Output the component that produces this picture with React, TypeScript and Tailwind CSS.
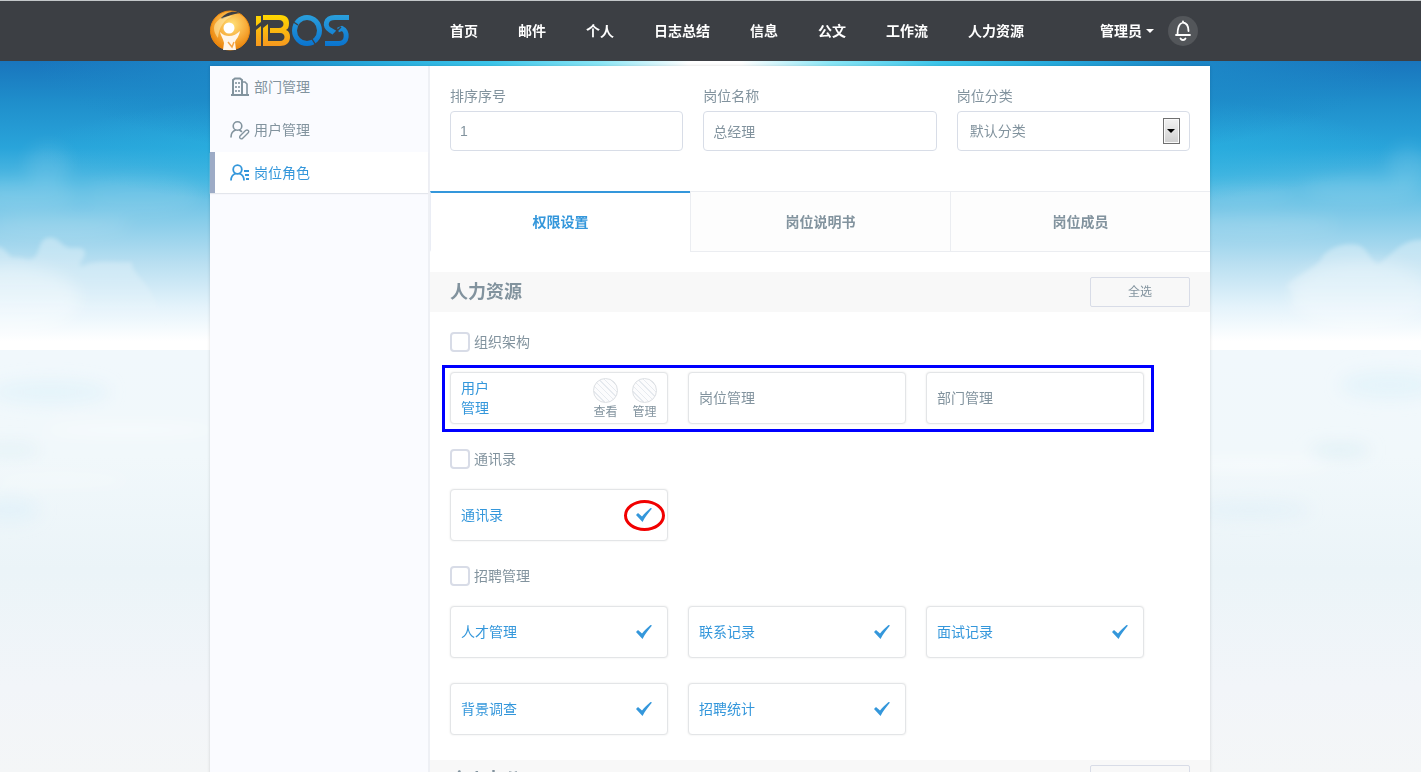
import clsx from 'clsx';
import React from 'react';

const navItems = ['首页', '邮件', '个人', '日志总结', '信息', '公文', '工作流', '人力资源'];

interface Permission {
  name: string;
  active?: boolean;
  checked?: boolean;
  levels?: string[];
}

interface PermissionGroup {
  id: string;
  title: string;
  highlighted?: boolean;
  items: Permission[];
}

const groups: PermissionGroup[] = [
  {
    id: 'organization',
    title: '组织架构',
    highlighted: true,
    items: [{ name: '用户管理', active: true, levels: ['查看', '管理'] }, { name: '岗位管理' }, { name: '部门管理' }],
  },
  {
    id: 'contact',
    title: '通讯录',
    items: [{ name: '通讯录', active: true, checked: true }],
  },
  {
    id: 'recruit',
    title: '招聘管理',
    items: [
      { name: '人才管理', active: true, checked: true },
      { name: '联系记录', active: true, checked: true },
      { name: '面试记录', active: true, checked: true },
      { name: '背景调查', active: true, checked: true },
      { name: '招聘统计', active: true, checked: true },
    ],
  },
];

const Logo = () => (
  <svg aria-label="IBOS" className="block" height="42" role="img" viewBox="0 0 140 42" width="140">
    <defs>
      <radialGradient cx="0.55" cy="0.35" id="ball" r="0.65">
        <stop offset="0" stopColor="#ffe27a" />
        <stop offset="0.55" stopColor="#f8ae3c" />
        <stop offset="1" stopColor="#ea8208" />
      </radialGradient>
      <linearGradient gradientUnits="userSpaceOnUse" id="gold" x1="0" x2="0" y1="5" y2="36">
        <stop offset="0" stopColor="#ffd800" />
        <stop offset="1" stopColor="#f6981f" />
      </linearGradient>
      <linearGradient gradientUnits="userSpaceOnUse" id="blue" x1="0" x2="0" y1="5" y2="36">
        <stop offset="0" stopColor="#2a9fdc" />
        <stop offset="1" stopColor="#0a74cf" />
      </linearGradient>
    </defs>
    <circle cx="20" cy="20.5" fill="url(#ball)" r="19.5" stroke="#ee8a10" />
    <path d="M11 8 C16 3 22 0 30 3 C23 4 17 6 12 9Z" fill="#3c3f44" />
    <path d="M5 14 C9 8 15 6 22 6 C14 10 9 17 8 28 C4 23 3 18 5 14Z" fill="#ffe9a8" opacity="0.6" />
    <circle cx="19" cy="18" fill="#fff" r="5.5" />
    <path
      d="M10 22 C13 25 16 26 19 26 C23 26 27 24 30 21 C29 27 26 29 25 32 L26 40 H13 L14 33 C13 28 11 26 10 22Z"
      fill="#fff6ea"
    />
    <path d="M18 32 L22 37 L24 32" fill="none" stroke="#f5a545" strokeWidth="1.5" />
    <path d="M46 6 H51 V12 L46 16Z M46 20 L51 16 V36 H46Z" fill="url(#gold)" />
    <path
      d="M53 5 H70 C77 5 79 9 79 13 C79 17 78 19 76 20 C79 21 80 24 80 27 C80 33 76 36 70 36 H53 V18 L58 14 V31 H70 C76 31 76 23 70 23 H60 V18 H69 C75 18 75 10 69 10 H53Z"
      fill="url(#gold)"
      fillRule="evenodd"
    />
    <ellipse cx="97" cy="20.5" fill="none" rx="12.5" ry="13" stroke="url(#blue)" strokeWidth="5" />
    <path d="M82 11 L88 15 M102 29 L107 37" stroke="#3c3f44" strokeWidth="1.4" />
    <path
      d="M139 7.5 H125 C115 7.5 114 17 120 20 L125 23 M128 20 L132 18.5 C138 21 138 33.5 129 33.5 H115"
      fill="none"
      stroke="url(#blue)"
      strokeWidth="5"
    />
    <path d="M123 25 L131 17" stroke="#3c3f44" strokeWidth="1.4" />
  </svg>
);

const SkyBackdrop = () => (
  <svg aria-hidden="true" className="absolute inset-0 h-full w-full" preserveAspectRatio="none" viewBox="0 0 1421 772">
    <defs>
      <linearGradient gradientUnits="userSpaceOnUse" id="sky" x1="0" x2="0" y1="61" y2="350">
        <stop offset="0" stopColor="#1975bd" />
        <stop offset="0.14" stopColor="#1f8ecb" />
        <stop offset="0.3" stopColor="#29a4da" />
        <stop offset="0.42" stopColor="#55bbe3" />
        <stop offset="0.55" stopColor="#86cce9" />
        <stop offset="0.7" stopColor="#b9dff1" />
        <stop offset="0.85" stopColor="#e4f3fb" />
        <stop offset="0.97" stopColor="#ffffff" />
      </linearGradient>
      <linearGradient gradientUnits="userSpaceOnUse" id="ground" x1="0" x2="0" y1="350" y2="772">
        <stop offset="0" stopColor="#f1f8fc" />
        <stop offset="0.25" stopColor="#f1f8fb" />
        <stop offset="0.52" stopColor="#ebf4f8" />
        <stop offset="0.8" stopColor="#f2f5f9" />
        <stop offset="1" stopColor="#f4f6f7" />
      </linearGradient>
      <radialGradient
        cx="0"
        cy="0"
        gradientTransform="translate(715 64) scale(680 120)"
        gradientUnits="userSpaceOnUse"
        id="glow"
        r="1"
      >
        <stop offset="0.04" stopColor="#fff" />
        <stop offset="0.17" stopColor="#8ae6f6" />
        <stop offset="0.33" stopColor="#3cc5ea" />
        <stop offset="0.5" stopColor="#27aadc" />
        <stop offset="0.7" stopColor="#1d8bc9" stopOpacity="0.8" />
        <stop offset="1" stopColor="#1d8bc9" stopOpacity="0" />
      </radialGradient>
      <radialGradient
        cx="0"
        cy="0"
        gradientTransform="translate(715 150) scale(680 75)"
        gradientUnits="userSpaceOnUse"
        id="haze"
        r="1"
      >
        <stop offset="0.6" stopColor="#29b2e0" stopOpacity="0.8" />
        <stop offset="1" stopColor="#29b2e0" stopOpacity="0" />
      </radialGradient>
      <linearGradient gradientUnits="userSpaceOnUse" id="cloud" x1="0" x2="0" y1="235" y2="325">
        <stop offset="0" stopColor="#fff" stopOpacity="0.35" />
        <stop offset="0.4" stopColor="#fff" stopOpacity="0.25" />
        <stop offset="1" stopColor="#fff" stopOpacity="0" />
      </linearGradient>
      <filter height="200%" id="soft" width="140%" x="-20%" y="-50%">
        <feGaussianBlur stdDeviation="8" />
      </filter>
      <filter id="edge">
        <feGaussianBlur stdDeviation="2" />
      </filter>
    </defs>
    <rect fill="url(#sky)" height="350" width="1421" />
    <rect fill="url(#haze)" height="250" width="1421" />
    <rect fill="url(#glow)" height="200" width="1421" />
    <g fill="#fff" filter="url(#soft)">
      <ellipse cx="48" cy="165" opacity="0.1" rx="22" ry="20" />
      <ellipse cx="20" cy="195" opacity="0.12" rx="60" ry="14" />
      <ellipse cx="140" cy="195" opacity="0.08" rx="60" ry="18" />
      <ellipse cx="60" cy="225" opacity="0.1" rx="70" ry="12" />
      <ellipse cx="10" cy="300" opacity="0.35" rx="70" ry="35" />
      <ellipse cx="1408" cy="165" opacity="0.1" rx="20" ry="20" />
      <ellipse cx="1250" cy="194" opacity="0.1" rx="50" ry="7" />
      <ellipse cx="1360" cy="190" opacity="0.1" rx="60" ry="12" />
      <ellipse cx="1260" cy="225" opacity="0.1" rx="80" ry="10" />
      <ellipse cx="1360" cy="295" opacity="0.3" rx="70" ry="35" />
    </g>
    <g fill="url(#cloud)" filter="url(#edge)">
      <path d="M-5 247 C4 245 7 255 13 258 C22 256 26 262 34 258 C41 251 38 241 47 238 C57 236 60 243 65 246 C72 251 80 244 85 251 C86 259 77 262 81 267 C96 259 112 263 132 262 C131 270 140 276 150 290 L170 330 H-5Z" />
      <path d="M1286 286 C1298 274 1312 270 1321 260 C1325 248 1345 242 1358 245 C1368 248 1369 260 1378 264 C1394 255 1400 238 1426 240 V330 H1275 C1290 310 1300 298 1286 286Z" />
    </g>
    <rect fill="url(#ground)" height="422" width="1421" y="350" />
    <g filter="url(#soft)">
      <ellipse cx="50" cy="392" fill="#def1fa" opacity="0.6" rx="60" ry="12" />
      <ellipse cx="10" cy="450" fill="#e0f0f6" opacity="0.8" rx="30" ry="6" />
      <ellipse cx="130" cy="430" fill="#fff" opacity="0.5" rx="90" ry="6" />
      <ellipse cx="60" cy="480" fill="#fff" opacity="0.4" rx="70" ry="5" />
      <ellipse cx="10" cy="510" fill="#e0f1fa" opacity="0.7" rx="30" ry="12" />
      <ellipse cx="1340" cy="450" fill="#dceef5" rx="30" ry="5" />
      <ellipse cx="1390" cy="385" fill="#def1fa" opacity="0.6" rx="50" ry="14" />
      <ellipse cx="1250" cy="465" fill="#fff" opacity="0.5" rx="80" ry="6" />
      <ellipse cx="1250" cy="510" fill="#e0f0f8" opacity="0.7" rx="60" ry="8" />
    </g>
  </svg>
);

const BuildingIcon = () => (
  <svg aria-hidden="true" fill="none" height="20" stroke="currentColor" viewBox="0 0 20 20" width="20">
    <path d="M1 18 H19" strokeWidth="2" />
    <path d="M3 17 V3 L5 1.5 H10 L12 3 V17" strokeWidth="2" />
    <path d="M13 5 H15 L17 7 V17" strokeWidth="1.6" />
    <path d="M6 5v2 M9 5v2 M6 9v2 M9 9v2 M6 13v2 M9 13v2" strokeWidth="1.6" />
  </svg>
);

const UserEditIcon = () => (
  <svg
    aria-hidden="true"
    fill="none"
    height="20"
    stroke="currentColor"
    strokeLinecap="round"
    strokeWidth="1.6"
    viewBox="0 0 20 20"
    width="20"
  >
    <circle cx="7.5" cy="6" r="4.3" />
    <path d="M1 17 C1 13 3 11 5.5 10 M9.5 10 L11.5 11.5" />
    <path d="M10 16 L15.5 10.5 C17.5 9 20 11 18 13 L12.5 18.5 C10.5 19.5 9 18 10 16Z" strokeWidth="1.4" />
  </svg>
);

const UserRoleIcon = () => (
  <svg
    aria-hidden="true"
    fill="none"
    height="20"
    stroke="currentColor"
    strokeWidth="1.8"
    viewBox="0 0 20 20"
    width="20"
  >
    <circle cx="7.5" cy="6.5" r="4.3" />
    <path d="M1 17.5 C1 13.5 3 11.5 5.5 10.5 M9.5 10.5 C12 11.5 14 13.5 14 17.5" />
    <path d="M14 8 H19 M15 12 H19 M16 16 H19" />
  </svg>
);

const sideItems = [
  { name: '部门管理', Icon: BuildingIcon },
  { name: '用户管理', Icon: UserEditIcon },
  { name: '岗位角色', Icon: UserRoleIcon, active: true },
];

const tabs = ['权限设置', '岗位说明书', '岗位成员'];

const Header = () => (
  <header className="relative h-[61px] border-t border-[#c3c7c9] bg-[#3c3f44] pr-px">
    <div className="mx-auto flex h-full max-w-[1000px] items-center">
      <a className="shrink-0" href="#home">
        <Logo />
      </a>
      <nav className="ml-20 flex">
        {navItems.map((item) => (
          <a className="px-5 text-sm font-bold text-white" href={`#${item}`} key={item}>
            {item}
          </a>
        ))}
      </nav>
      <div className="mr-3 ml-auto flex items-center gap-[14px]">
        <button className="flex items-center gap-1 text-sm font-bold text-white" type="button">
          管理员
          <span className="border-x-4 border-t-4 border-x-transparent border-t-white" />
        </button>
        <button
          aria-label="通知"
          className="flex size-[30px] items-center justify-center rounded-full bg-[#53565a] text-white"
          type="button"
        >
          <svg
            fill="none"
            height="22"
            stroke="currentColor"
            strokeLinecap="round"
            strokeWidth="1.8"
            viewBox="0 0 18 22"
            width="18"
          >
            <path d="M2 15 H16 M3.5 15 C3.5 12 3.5 10 4.5 7 C5.5 4 7 3 9 2.5 C12 3 14.5 6 14.5 11 M9 1.5 V2.5" />
            <path d="M6.5 18.5 C7.5 20.5 10.5 20.5 11.5 18.5" />
          </svg>
        </button>
      </div>
    </div>
  </header>
);

const Sidebar = () => (
  <aside className="w-[220px] shrink-0 border-r-2 border-[#eef0f5] bg-[#fafbff]">
    <nav className="flex flex-col gap-[2px]">
      {sideItems.map(({ name, Icon, active }) => (
        <a
          className={clsx(
            'flex h-[41px] items-center gap-1 pl-5 text-sm',
            active
              ? 'bg-white text-[#3497db] shadow-[inset_5px_0_0_#9dabc6,0_1px_1px_#e3e6ec]'
              : 'text-[#82939e]',
          )}
          href={`#${name}`}
          key={name}
        >
          <Icon />
          {name}
        </a>
      ))}
    </nav>
  </aside>
);

const fieldClassName =
  'h-10 w-full rounded-[4px] border border-[#d8dde7] bg-white px-[9px] text-sm text-[#82939e] outline-none';

const PositionForm = () => (
  <form className="grid grid-cols-3 gap-5 px-5 pt-5 pb-10">
    <label className="flex flex-col gap-[5px]">
      <span className="leading-5">排序序号</span>
      <input className={fieldClassName} defaultValue="1" type="text" />
    </label>
    <label className="flex flex-col gap-[5px]">
      <span className="leading-5">岗位名称</span>
      <input className={fieldClassName} defaultValue="总经理" type="text" />
    </label>
    <label className="flex flex-col gap-[5px]">
      <span className="leading-5">岗位分类</span>
      <span className="relative block">
        <select className={clsx(fieldClassName, 'appearance-none pl-3')} defaultValue="默认分类">
          <option>默认分类</option>
        </select>
        <span className="pointer-events-none absolute top-[7px] right-[10px] flex h-[26px] w-[17px] items-center justify-center border border-[#707070] bg-linear-to-b from-[#f2f2f2] to-[#cfcfcf] shadow-[inset_0_0_0_1px_#fafafa]">
          <span className="border-x-4 border-t-4 border-x-transparent border-t-black" />
        </span>
      </span>
    </label>
  </form>
);

const Tabs = () => (
  <div className="grid grid-cols-3" role="tablist">
    {tabs.map((tab, index) => (
      <button
        aria-selected={index === 0}
        className={clsx(
          'h-[61px] text-sm font-bold',
          index === 0
            ? 'border-y-2 border-l border-t-[#3497db] border-b-white border-l-[#eaedf5] bg-white text-[#3497db]'
            : 'border-y border-l border-[#ebedf1] bg-[#fdfdfd] text-[#82939e]',
        )}
        key={tab}
        role="tab"
        type="button"
      >
        {tab}
      </button>
    ))}
  </div>
);

const SectionTitle: React.FC<{ title: string }> = ({ title }) => (
  <div className="flex h-10 items-center justify-between bg-[#f8f8f8] px-5">
    <h2 className="text-lg font-bold">{title}</h2>
    <button className="h-[30px] w-[100px] rounded-[2px] border border-[#d8dce7] text-xs" type="button">
      全选
    </button>
  </div>
);

const CheckMark = () => (
  <svg aria-hidden="true" className="block" height="14" viewBox="0 0 16 14" width="16">
    <path d="M0 7 L2 5 L6 8.5 C8.5 5.5 11 3 14.5 0 L16 0.5 C13 4 9 9 6.5 14Z" fill="#3497db" />
  </svg>
);

const PermissionCard: React.FC<{ circled: boolean; item: Permission }> = ({ circled, item }) => (
  <div
    className={clsx(
      'flex h-[52px] items-center justify-between rounded-[4px] border border-[#e3e5e7] bg-white px-[10px] shadow-[0_0_2px_rgba(0,0,0,0.1)]',
      item.active && 'text-[#3497db]',
    )}
  >
    <span className={clsx('leading-5', item.levels && 'w-7')}>{item.name}</span>
    {item.levels && (
      <div className="flex gap-[14px] pt-[2px]">
        {item.levels.map((level) => (
          <button
            className="flex flex-col items-center gap-px text-xs leading-4 text-[#82939e]"
            key={level}
            type="button"
          >
            <span className="size-[25px] rounded-full border border-[#dcdfe3] bg-[repeating-linear-gradient(45deg,#fcfcfd_0_3px,#e6eaef_3px_4px)]" />
            {level}
          </button>
        ))}
      </div>
    )}
    {item.checked && (
      <button aria-label={`${item.name} 已授权`} className="relative mr-[5px]" type="button">
        <CheckMark />
        {circled && (
          <span className="absolute -top-2 -left-3 h-[31px] w-[41px] rounded-[50%] border-3 border-[#f10000]" />
        )}
      </button>
    )}
  </div>
);

const PermissionSection: React.FC<{ group: PermissionGroup }> = ({ group }) => (
  <section>
    <label className="flex w-fit items-center gap-1 px-5 leading-5">
      <input
        className="size-5 appearance-none rounded-[4px] border-2 border-[#d8dce7] bg-white checked:bg-[#3497db]"
        type="checkbox"
      />
      {group.title}
    </label>
    <div className="relative mt-5 grid grid-cols-[repeat(auto-fill,218px)] gap-x-5 gap-y-[25px] px-5">
      {group.items.map((item) => (
        <PermissionCard circled={group.id === 'contact'} item={item} key={item.name} />
      ))}
      {group.highlighted && (
        <span className="pointer-events-none absolute -top-[7px] left-3 h-[67px] w-[712px] border-3 border-[#0000ff]" />
      )}
    </div>
  </section>
);

const App: React.FC = () => (
  <div className="relative h-screen bg-[#f4f6f7] font-['Liberation_Sans','Noto_Sans_CJK_SC',sans-serif] text-sm text-[#82939e]">
    <SkyBackdrop />
    <div className="relative h-full overflow-y-auto [scrollbar-width:none]">
      <Header />
      <div className="pt-[5px] pr-px">
        <div className="mx-auto flex max-w-[1000px] bg-white shadow-[0_0_3px_rgba(0,0,0,0.15)]">
          <Sidebar />
          <main className="min-w-0 flex-1">
            <PositionForm />
            <Tabs />
            <div className="pt-5">
              <SectionTitle title="人力资源" />
              <div className="flex flex-col gap-[25px] pt-5 pb-[25px]">
                {groups.map((group) => (
                  <PermissionSection group={group} key={group.id} />
                ))}
              </div>
              <SectionTitle title="个人办公" />
            </div>
          </main>
        </div>
      </div>
    </div>
  </div>
);

export default App;
